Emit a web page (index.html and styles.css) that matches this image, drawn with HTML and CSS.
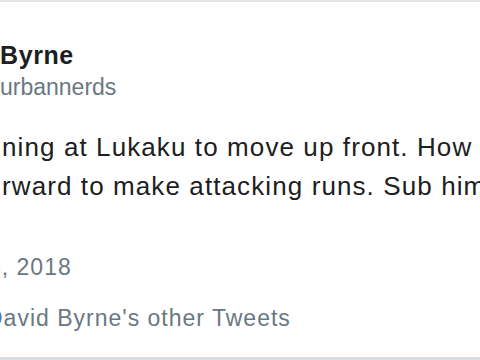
FILE: index.html
```html
<!DOCTYPE html>
<html>
  <head>
    <meta charset="utf-8" />
    <title>Tweet</title>
    <link rel="stylesheet" href="styles.css">
  </head>
  <body>
    <div class="tweet">
      <div class="author">
        <div class="name">Byrne</div>
        <div class="handle">urbannerds</div>
      </div>
      <p class="text">
        <span class="line">ning at Lukaku to move up front. How <span class="emoji">&#x1F914;</span></span>
        <span class="line">rward to make attacking runs. Sub him</span>
      </p>
      <div class="date">8, 2018</div>
      <div class="more">David Byrne's other Tweets</div>
    </div>
  </body>
</html>
```

FILE: styles.css
```css
html, body {
  margin: 0;
  padding: 0;
  width: 480px;
  height: 360px;
  overflow: hidden;
  background-color: #ffffff;
}
.tweet {
  box-sizing: border-box;
  height: 360px;
  border-top: 2px solid #e3e5e7;
  border-bottom: 3px solid #d8dcdf;
  padding-top: 39px;
  font-family: "Liberation Sans", Arial, sans-serif;
  color: #1c2022;
  white-space: nowrap;
}
.name {
  font-size: 25px;
  line-height: 28px;
  font-weight: bold;
  letter-spacing: 0.6px;
}
.handle {
  margin-top: 5px;
  font-size: 23px;
  line-height: 26px;
  color: #697882;
}
.text {
  margin: 28px 0 0 2px;
  font-size: 26px;
  line-height: 39px;
  letter-spacing: 1.1px;
}
.line {
  display: block;
}
.emoji {
  color: #f4a623;
  font-size: 24px;
}
.date {
  margin-top: 48px;
  margin-left: -12px;
  font-size: 23px;
  line-height: 26px;
  letter-spacing: 1px;
  color: #697882;
}
.more {
  margin-top: 25px;
  margin-left: -14px;
  font-size: 23px;
  line-height: 26px;
  letter-spacing: 1px;
  color: #697882;
}
```
